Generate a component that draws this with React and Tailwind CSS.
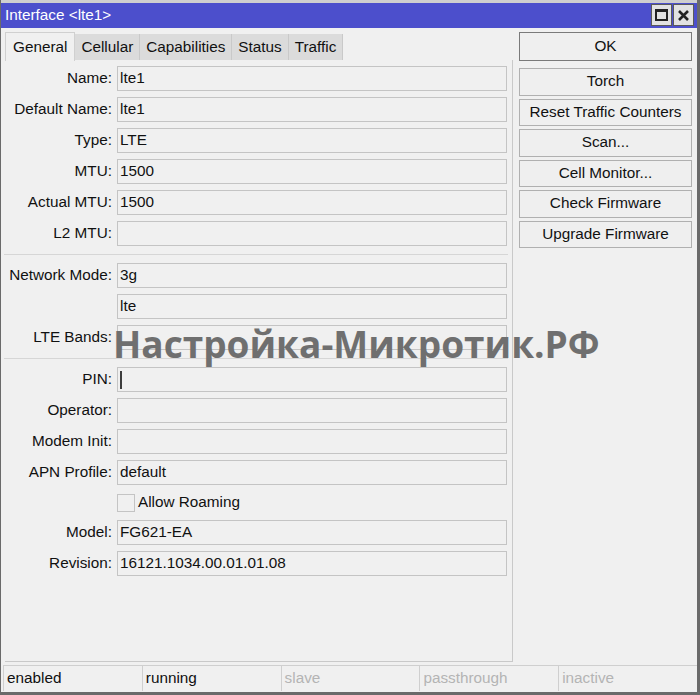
import React from "react";

const Field = ({ label, value, caret }) => (
  <div className="flex items-center h-[25px]">
    <div className="w-[112px] text-right pr-[5px] whitespace-nowrap">{label}</div>
    <div className="flex-1 h-[25px] border border-[#c4c4c4] bg-[#f0f0f0] flex items-center px-[2px] whitespace-nowrap">
      {caret && <span className="inline-block w-[2px] h-[18px] bg-[#3c3c3c] mr-[2px]" />}
      {value}
    </div>
  </div>
);

const Sep = () => <div className="border-t border-[#d6d6d6] -mx-[1px] my-[2px]" />;

const Btn = ({ children, primary }) => (
  <div
    className={
      "flex items-center justify-center border bg-[#efefef] whitespace-nowrap " +
      (primary ? "border-[#7a7a7a] h-[29px]" : "border-[#b0b0b0] h-[27.5px]")
    }
  >
    {children}
  </div>
);

export default function App() {
  const tabs = ["Cellular", "Capabilities", "Status", "Traffic"];
  const status = [
    ["enabled", true],
    ["running", true],
    ["slave", false],
    ["passthrough", false],
    ["inactive", false],
  ];
  return (
    <div
      className="relative w-[700px] h-[695px] bg-[#f0f0f0] border-l border-r-[3px] border-b-[3px] border-[#6a6a6a] flex flex-col text-[15.3px] text-[#111] overflow-hidden"
      style={{ fontFamily: '"Liberation Sans", Arial, sans-serif' }}
    >
      <div className="h-[3px] bg-[#cfcfcf]" />
      {/* title bar */}
      <div className="h-[25px] bg-[#4c4fcc] flex items-center pl-[4px] pr-[3px]">
        <div className="flex-1 text-white text-[15.3px]">Interface &lt;lte1&gt;</div>
        <div className="flex gap-[1px] -mt-[1px]">
          <div className="w-[21px] h-[22px] bg-[#e2e2e2] border border-[#5a5a5a] flex items-center justify-center">
            <div className="w-[13px] h-[12px] border-2 border-[#222] border-t-[3px]" />
          </div>
          <div className="w-[21px] h-[22px] bg-[#e2e2e2] border border-[#5a5a5a] flex items-center justify-center">
            <svg width="13" height="13" viewBox="0 0 13 13">
              <path d="M2 2 L11 11 M11 2 L2 11" stroke="#222" strokeWidth="2.6" />
            </svg>
          </div>
        </div>
      </div>

      <div className="flex-1 flex pl-[4px] pr-[5px] pt-[4px]">
        {/* left column */}
        <div className="w-[508px] flex flex-col">
          <div className="flex items-end h-[28px]">
            <div className="h-[29px] px-[7px] flex items-center bg-[#f0f0f0] border border-b-0 border-[#d0d0d0] -mb-[1px] relative z-10">
              General
            </div>
            {tabs.map((t) => (
              <div
                key={t}
                className="h-[26px] px-[6px] flex items-center bg-[#dbdbdb] border-r border-[#c9c9c9]"
              >
                {t}
              </div>
            ))}
          </div>
          <div className="flex-1 border-r border-b border-[#c9c9c9] mb-[3px] pt-[6px] pr-[5px] flex flex-col gap-[6px]">
            <Field label="Name:" value="lte1" />
            <Field label="Default Name:" value="lte1" />
            <Field label="Type:" value="LTE" />
            <Field label="MTU:" value="1500" />
            <Field label="Actual MTU:" value="1500" />
            <Field label="L2 MTU:" value="" />
            <Sep />
            <Field label="Network Mode:" value="3g" />
            <Field label="" value="lte" />
            <Field label="LTE Bands:" value="" />
            <Sep />
            <Field label="PIN:" value="" caret />
            <Field label="Operator:" value="" />
            <Field label="Modem Init:" value="" />
            <Field label="APN Profile:" value="default" />
            <div className="flex items-center h-[23px]">
              <div className="w-[112px]" />
              <div className="w-[18px] h-[18px] border border-[#c4c4c4] bg-[#f0f0f0] mr-[3px]" />
              <span>Allow Roaming</span>
            </div>
            <Field label="Model:" value="FG621-EA" />
            <Field label="Revision:" value="16121.1034.00.01.01.08" />
          </div>
        </div>
        {/* right column */}
        <div className="flex-1 pl-[6px] flex flex-col">
          <Btn primary>OK</Btn>
          <div className="h-[7px]" />
          <div className="flex flex-col gap-[3px]">
            <Btn>Torch</Btn>
            <Btn>Reset Traffic Counters</Btn>
            <Btn>Scan...</Btn>
            <Btn>Cell Monitor...</Btn>
            <Btn>Check Firmware</Btn>
            <Btn>Upgrade Firmware</Btn>
          </div>
        </div>
      </div>

      {/* status bar */}
      <div className="h-[27px] flex pl-[2px] pb-[1px]">
        {status.map(([s, on]) => (
          <div
            key={s}
            className={
              "flex-1 border-t border-l border-[#cfcfcf] flex items-center pl-[3px] " +
              (on ? "text-[#111]" : "text-[#b4b4b4]")
            }
          >
            {s}
          </div>
        ))}
      </div>

      {/* watermark */}
      <div
        className="absolute left-[112px] top-[325px] text-[37px] font-bold text-[#6f6f6f] leading-none whitespace-nowrap pointer-events-none"
        style={{ fontFamily: '"Open Sans", sans-serif' }}
      >
        Настройка-Микротик.РФ
      </div>
    </div>
  );
}
